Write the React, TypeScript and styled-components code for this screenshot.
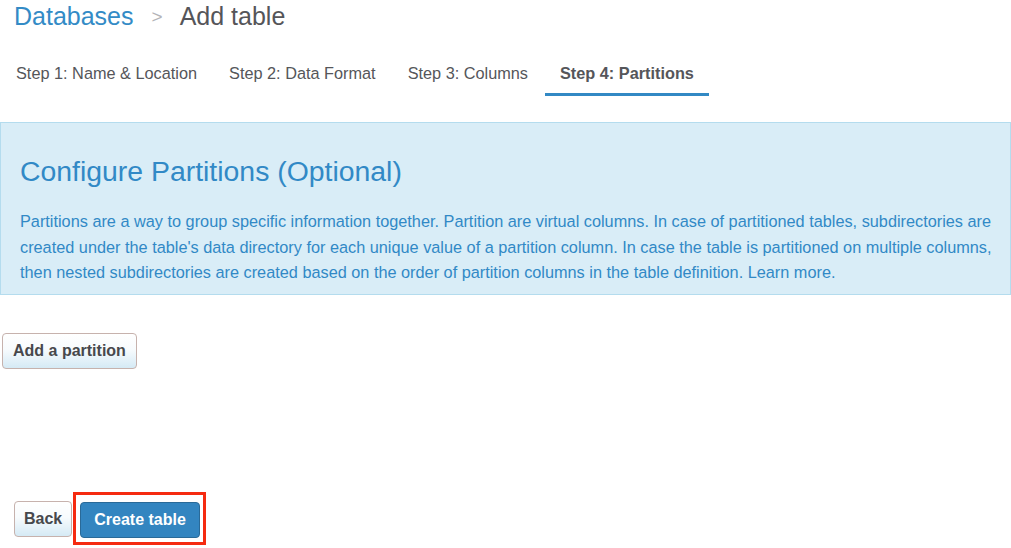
import React from 'react';
import styled, { createGlobalStyle } from 'styled-components';

const GlobalStyle = createGlobalStyle`
    body {
        margin: 0;
        background: #ffffff;
        font-family: "Liberation Sans", Arial, sans-serif;
    }
`;

const StyledPage = styled.div`
    width: 1011px;
    height: 548px;
    overflow: hidden;
`;

const StyledBreadcrumb = styled.h1`
    margin: 0;
    padding: 0 0 0 14px;
    height: 33px;
    display: flex;
    align-items: center;
    font-size: 25px;
    font-weight: normal;
    color: #555559;
`;

const StyledCrumbLink = styled.a`
    color: #338bc6;
    text-decoration: none;
`;

const StyledCrumbSeparator = styled.span`
    margin: 0 17px 0 18px;
    font-size: 19px;
    color: #b4b4b8;
`;

const StyledTabs = styled.nav`
    display: flex;
    gap: 2px;
    margin-top: 21px;
    padding-left: 1px;
`;

const StyledTab = styled.div<{ $active?: boolean }>`
    padding: 0 15px;
    height: 39px;
    display: flex;
    align-items: center;
    font-size: 16.3px;
    color: #55565a;
    font-weight: ${(p) => (p.$active ? 'bold' : 'normal')};
    border-bottom: 3px solid ${(p) => (p.$active ? '#3289c4' : 'transparent')};
`;

const StyledInfoBox = styled.section`
    margin-top: 26px;
    height: 173px;
    box-sizing: border-box;
    padding: 29px 12px 0 19px;
    background: #d9edf7;
    border: 1px solid #b4dcee;
`;

const StyledInfoTitle = styled.h2`
    margin: 0;
    font-size: 28.4px;
    line-height: 38px;
    font-weight: normal;
    color: #3189c6;
`;

const StyledInfoText = styled.p`
    margin: 19px 0 0;
    font-size: 16.3px;
    line-height: 25.5px;
    color: #3189c6;
`;

const StyledButton = styled.button<{ $primary?: boolean }>`
    height: 36px;
    box-sizing: border-box;
    padding: 0 ${(p) => (p.$primary ? 13 : 9)}px;
    font-family: "Liberation Sans", Arial, sans-serif;
    font-size: 16px;
    font-weight: bold;
    border-radius: 4px;
    cursor: pointer;
    color: ${(p) => (p.$primary ? '#ffffff' : '#47484c')};
    background: ${(p) =>
        p.$primary ? '#3385c0' : 'linear-gradient(#ffffff 0%, #f7fbfd 45%, #d5eaf5 100%)'};
    border: 1px solid ${(p) => (p.$primary ? '#2a6a98' : '#c6b2ad')};
`;

const StyledActionRow = styled.div`
    margin-top: 38px;
    padding-left: 2px;

    & > button {
        padding: 0 10px;
    }
`;

const StyledFooter = styled.div`
    margin-top: 123px;
    padding-left: 14px;
    display: flex;
    align-items: center;
    gap: 1px;
`;

const StyledHighlight = styled.div`
    padding: 7px 3px 4px 4px;
    border: 3px solid #f52a10;
    display: flex;
`;

export default function App() {
    return (
        <StyledPage>
            <GlobalStyle />
            <StyledBreadcrumb>
                <StyledCrumbLink href="#">Databases</StyledCrumbLink>
                <StyledCrumbSeparator>&gt;</StyledCrumbSeparator>
                <span>Add table</span>
            </StyledBreadcrumb>

            <StyledTabs>
                <StyledTab>Step 1: Name &amp; Location</StyledTab>
                <StyledTab>Step 2: Data Format</StyledTab>
                <StyledTab>Step 3: Columns</StyledTab>
                <StyledTab $active>Step 4: Partitions</StyledTab>
            </StyledTabs>

            <StyledInfoBox>
                <StyledInfoTitle>Configure Partitions (Optional)</StyledInfoTitle>
                <StyledInfoText>
                    Partitions are a way to group specific information together. Partition are virtual columns. In case of
                    partitioned tables, subdirectories are created under the table's data directory for each unique value of a
                    partition column. In case the table is partitioned on multiple columns, then nested subdirectories are
                    created based on the order of partition columns in the table definition. Learn more.
                </StyledInfoText>
            </StyledInfoBox>

            <StyledActionRow>
                <StyledButton>Add a partition</StyledButton>
            </StyledActionRow>

            <StyledFooter>
                <StyledButton>Back</StyledButton>
                <StyledHighlight>
                    <StyledButton $primary>Create table</StyledButton>
                </StyledHighlight>
            </StyledFooter>
        </StyledPage>
    );
}
